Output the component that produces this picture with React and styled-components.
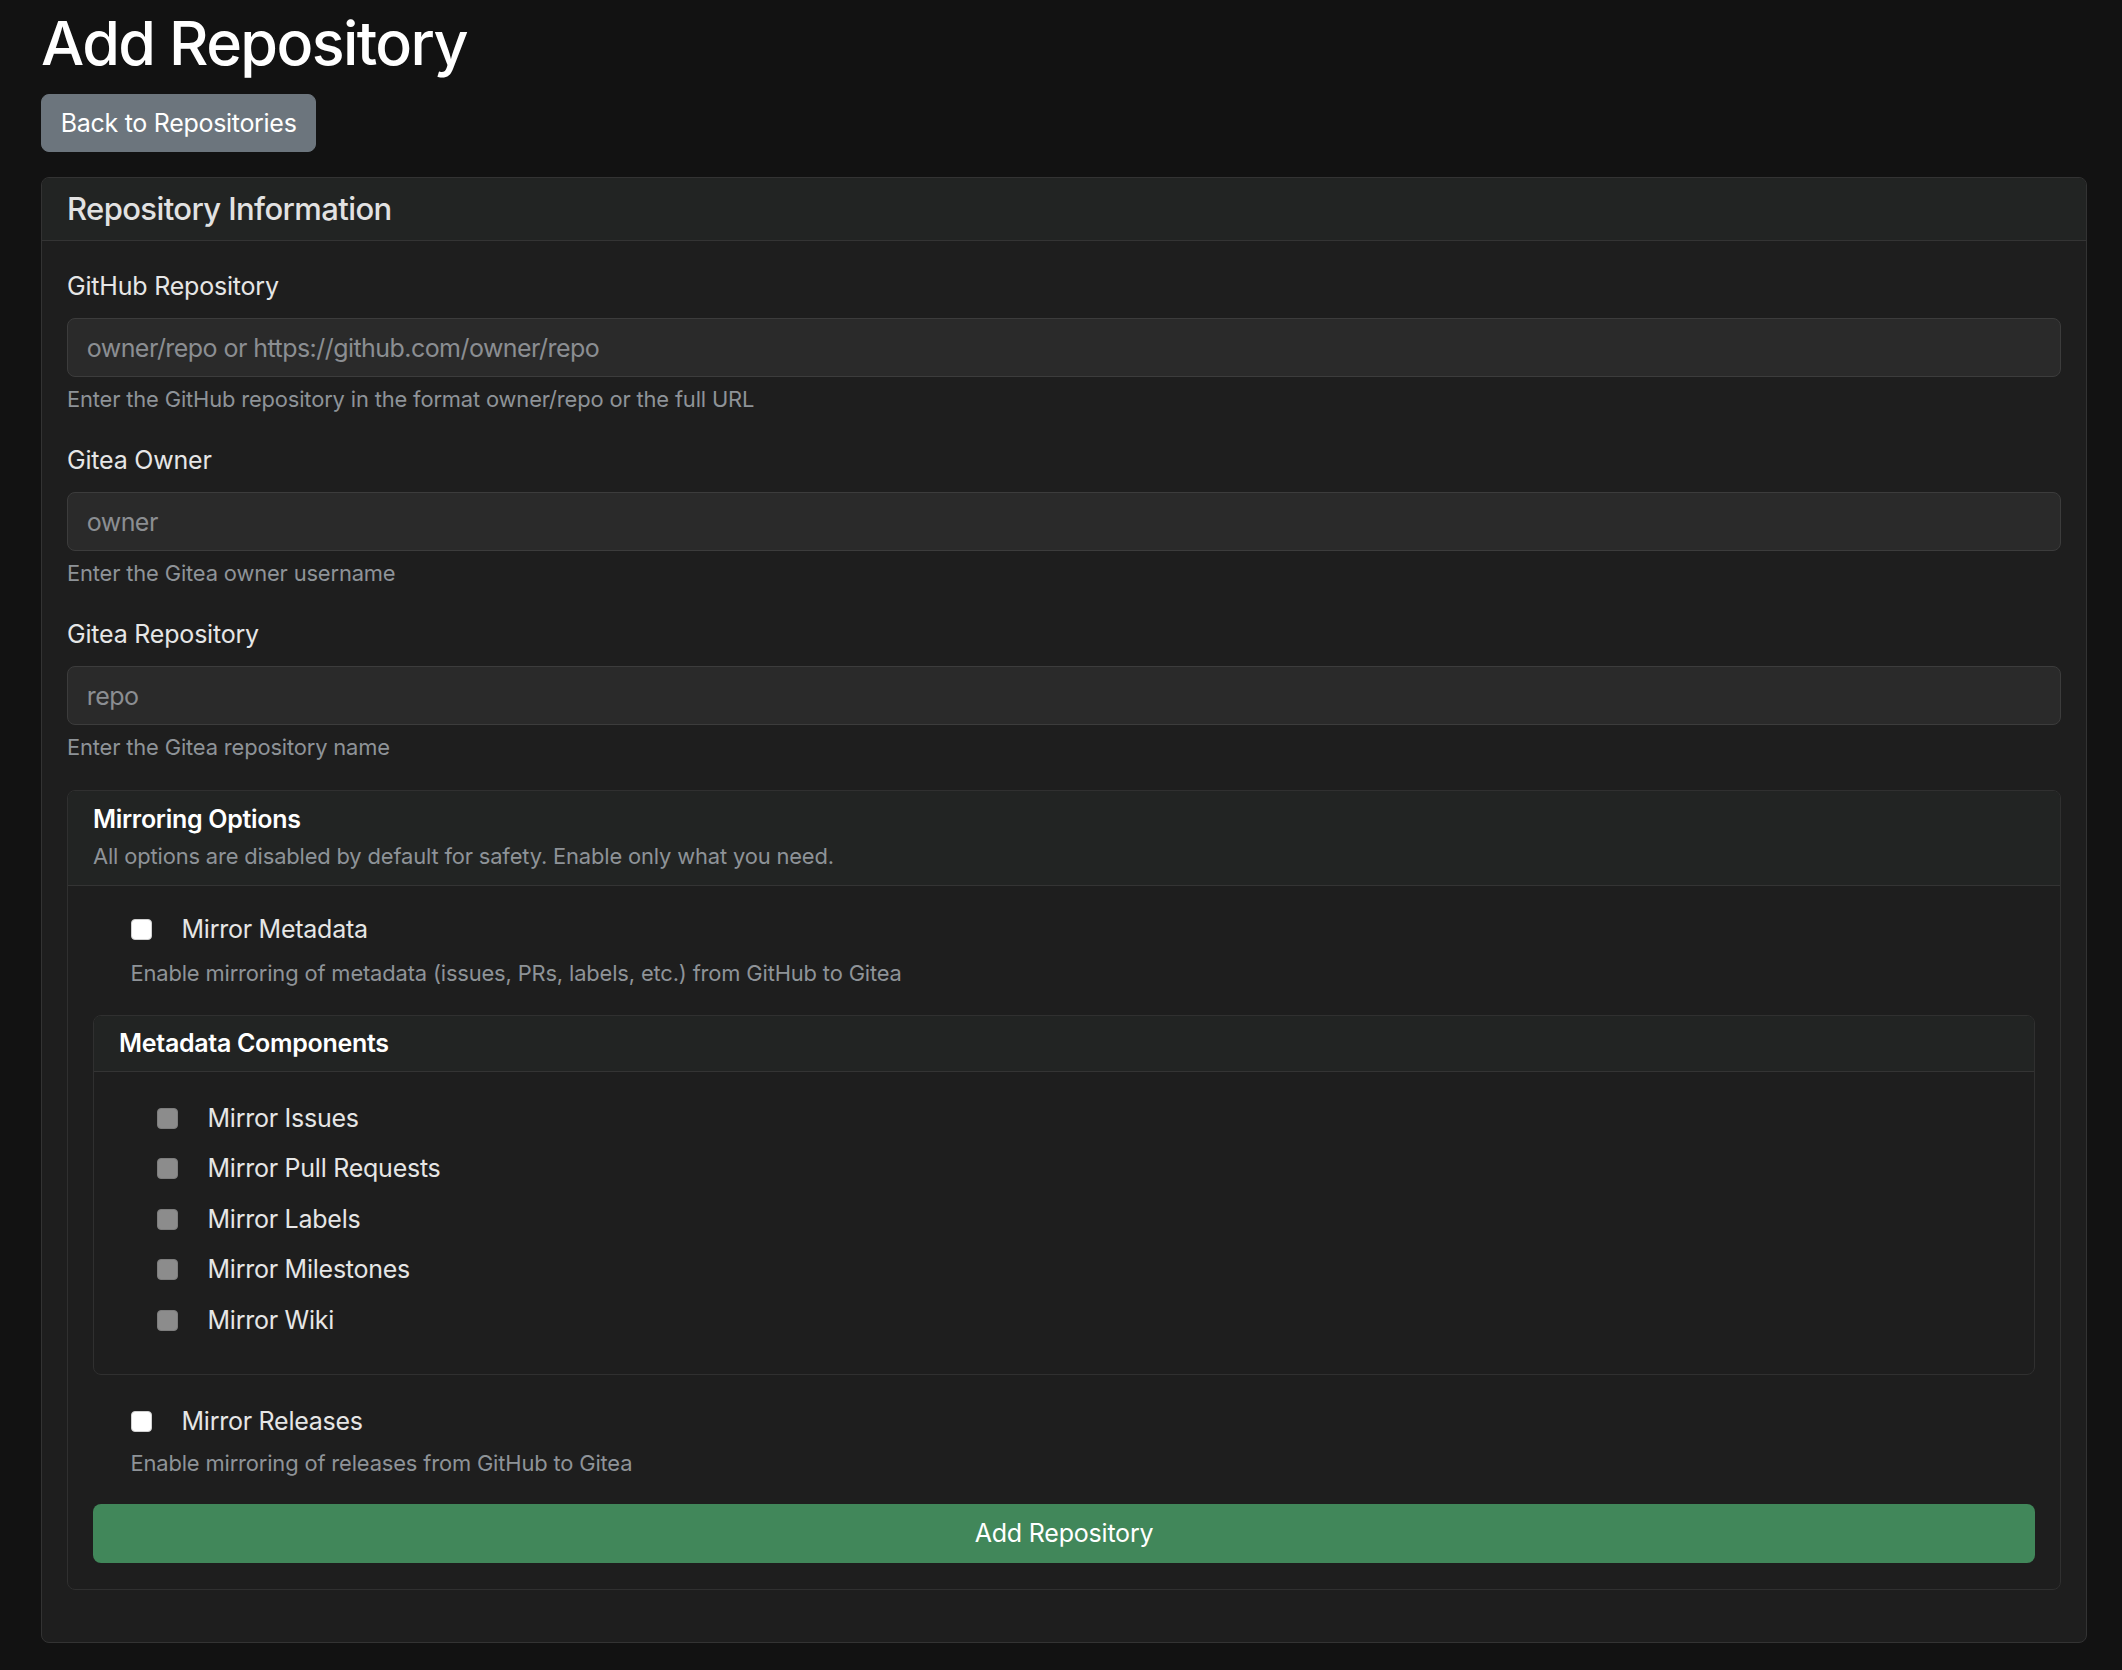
import React from "react"
import styled, { createGlobalStyle } from "styled-components"

const GlobalStyle = createGlobalStyle`
  html, body {
    margin: 0;
    padding: 0;
    background: #121212;
    font-family: Inter, "Noto Sans", "Liberation Sans", sans-serif;
    color: #e3e3e3;
  }
  * { box-sizing: border-box; }
`

const Page = styled.div`
  padding: 6px 35px 30px 41px;
`

const Title = styled.h1`
  margin: 0 0 12.5px;
  font-size: 61px;
  line-height: 75px;
  font-weight: 500;
  color: #fff;
  letter-spacing: -1.6px;
`

const BackButton = styled.button`
  height: 58px;
  padding: 0 18.75px;
  border: 1.5px solid #6c757d;
  border-radius: 8px;
  background: #6c757d;
  color: #fff;
  font-family: inherit;
  font-size: 25px;
  letter-spacing: -0.3px;
  cursor: pointer;
`

const Card = styled.div`
  margin-top: ${(p) => p.$mt || 0}px;
  margin-bottom: ${(p) => p.$mb || 0}px;
  border: 1.5px solid ${(p) => (p.$inner ? "#303030" : "#333")};
  border-radius: 8px;
  background: #1e1e1e;
  overflow: hidden;
`

const CardHeader = styled.div`
  padding: 12.5px 25px;
  background: #222423;
  border-bottom: 1.5px solid #343434;
`

const HeaderTitle = styled.h5`
  margin: 0;
  font-size: 31px;
  line-height: 37.5px;
  font-weight: 500;
  color: #e2e2e2;
  letter-spacing: -0.6px;
`

const SubTitle = styled.h6`
  margin: 0 0 ${(p) => p.$mb || 0}px;
  font-size: 25px;
  line-height: 30px;
  font-weight: 600;
  color: #fff;
  letter-spacing: -0.3px;
`

const CardBody = styled.div`
  padding: ${(p) => p.$pt || 25}px 25px ${(p) => p.$pb || 25}px;
`

const Field = styled.div`
  margin-bottom: 26px;
`

const Label = styled.label`
  display: block;
  margin-bottom: 12.5px;
  font-size: 25px;
  line-height: 37.5px;
  color: #e6e6e6;
  letter-spacing: -0.2px;
`

const Input = styled.input`
  display: block;
  width: 100%;
  height: 59px;
  padding: 0 18.75px;
  background: #2a2a2a;
  border: 1.5px solid #3c3c3c;
  border-radius: 8px;
  color: #e6e6e6;
  font-family: inherit;
  font-size: 25px;
  letter-spacing: -0.55px;
  outline: none;

  &::placeholder {
    color: #8b8e92;
  }
`

const Help = styled.div`
  margin-top: ${(p) => (p.$mt === undefined ? 6.25 : p.$mt)}px;
  font-size: 21.9px;
  line-height: 32.8px;
  color: #8e9398;
  letter-spacing: -0.15px;
`

const Check = styled.div`
  padding-left: 37.5px;
  margin-bottom: ${(p) => p.$mb || 0}px;
`

const CheckRow = styled.label`
  display: flex;
  align-items: center;
  gap: 30px;
  font-size: 25px;
  line-height: 37.5px;
  color: #e6e6e6;
  letter-spacing: -0.25px;
`

const Box = styled.input.attrs({ type: "checkbox" })`
  appearance: none;
  margin: 0;
  width: 21px;
  height: 21px;
  border-radius: 4px;
  flex: none;
  background: ${(p) => (p.disabled ? "#8c8c8c" : "#fff")};
  border: 1px solid ${(p) => (p.disabled ? "#7d7d7d" : "#d0d0d0")};
`

const SubmitButton = styled.button`
  display: block;
  width: 100%;
  height: 59px;
  border: none;
  border-radius: 8px;
  background: #41875a;
  color: #fff;
  font-family: inherit;
  font-size: 25px;
  letter-spacing: -0.2px;
  cursor: pointer;
`

const fields = [
  {
    label: "GitHub Repository",
    placeholder: "owner/repo or https://github.com/owner/repo",
    help: "Enter the GitHub repository in the format owner/repo or the full URL",
  },
  { label: "Gitea Owner", placeholder: "owner", help: "Enter the Gitea owner username" },
  { label: "Gitea Repository", placeholder: "repo", help: "Enter the Gitea repository name" },
]

const components = ["Mirror Issues", "Mirror Pull Requests", "Mirror Labels", "Mirror Milestones", "Mirror Wiki"]

const App = () => {
  return (
    <>
      <GlobalStyle />
      <Page>
        <Title>Add Repository</Title>
        <BackButton>Back to Repositories</BackButton>

        <Card $mt={25}>
          <CardHeader>
            <HeaderTitle>Repository Information</HeaderTitle>
          </CardHeader>
          <CardBody $pt={27}>
            {fields.map((f) => (
              <Field key={f.label}>
                <Label>{f.label}</Label>
                <Input placeholder={f.placeholder} />
                <Help>{f.help}</Help>
              </Field>
            ))}

            <Card $inner $mb={27}>
              <CardHeader>
                <SubTitle $mb={6}>Mirroring Options</SubTitle>
                <Help $mt={0}>
                  All options are disabled by default for safety. Enable only what you need.
                </Help>
              </CardHeader>
              <CardBody $pb={26}>
                <Check $mb={25}>
                  <CheckRow>
                    <Box />
                    Mirror Metadata
                  </CheckRow>
                  <Help $mt={8.5}>Enable mirroring of metadata (issues, PRs, labels, etc.) from GitHub to Gitea</Help>
                </Check>

                <Card $inner $mb={28}>
                  <CardHeader>
                    <SubTitle>Metadata Components</SubTitle>
                  </CardHeader>
                  <CardBody $pt={28} $pb={22}>
                    {components.map((c) => (
                      <Check key={c} $mb={13}>
                        <CheckRow>
                          <Box disabled />
                          {c}
                        </CheckRow>
                      </Check>
                    ))}
                  </CardBody>
                </Card>

                <Check $mb={24}>
                  <CheckRow>
                    <Box />
                    Mirror Releases
                  </CheckRow>
                  <Help>Enable mirroring of releases from GitHub to Gitea</Help>
                </Check>

                <SubmitButton>Add Repository</SubmitButton>
              </CardBody>
            </Card>
          </CardBody>
        </Card>
      </Page>
    </>
  )
}

export default App
